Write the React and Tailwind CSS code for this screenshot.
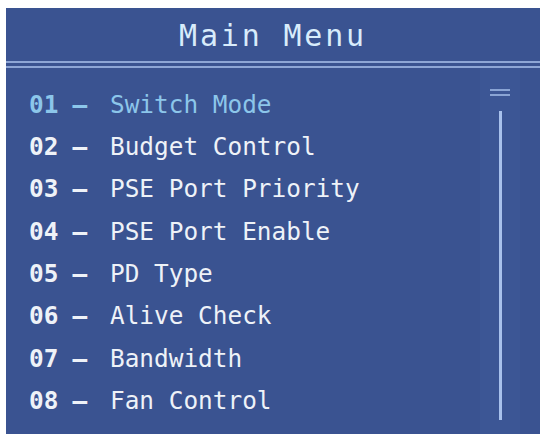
const ITEMS = [
  'Switch Mode',
  'Budget Control',
  'PSE Port Priority',
  'PSE Port Enable',
  'PD Type',
  'Alive Check',
  'Bandwidth',
  'Fan Control',
]

export default function App() {
  const selected = 0

  return (
    <div className="w-[540px] h-[434px] bg-white pl-[6px] pt-[8px]" style={{ fontFamily: '"DejaVu Sans Mono", "Liberation Mono", monospace' }}>
      <div className="h-full bg-[#3a5391] flex flex-col">
        {/* Title */}
        <div className="pt-[4px] h-[53px] text-center text-[30px] leading-[48px] tracking-[2.8px] text-[#d8ecfb]">
          Main Menu
        </div>

        {/* Double rule */}
        <div className="h-[2px] bg-[#8ea6d6]" />
        <div className="h-[3px]" />
        <div className="h-[2px] bg-[#8ea6d6]" />

        <div className="flex flex-1 min-h-0">
          {/* Entries */}
          <div className="flex-1 pl-[23px] pt-[16px]">
            {ITEMS.map((label, i) => {
              const active = i === selected
              return (
                <div key={label}
                  className={`flex h-[42.3px] items-center text-[24.4px] ${active ? 'text-[#8cc6ea]' : 'text-[#eef2f8]'}`}>
                  <span className="w-[81px] flex shrink-0 font-bold">
                    <span>{String(i + 1).padStart(2, '0')}</span>
                    <span className="ml-[14px]">–</span>
                  </span>
                  <span>{label}</span>
                </div>
              )
            })}
          </div>

          {/* Scroll indicator */}
          <div className="w-[40px] mr-[20px] flex flex-col items-center pt-[21px] pb-[14px] bg-[#3c5695]">
            <div className="w-[20px] h-[2px] bg-[#8aa4d4]" />
            <div className="w-[20px] h-[2px] mt-[3px] bg-[#8aa4d4]" />
            <div className="w-[3px] flex-1 mt-[15px] bg-[#a8c1ec]" />
          </div>
        </div>
      </div>
    </div>
  )
}
